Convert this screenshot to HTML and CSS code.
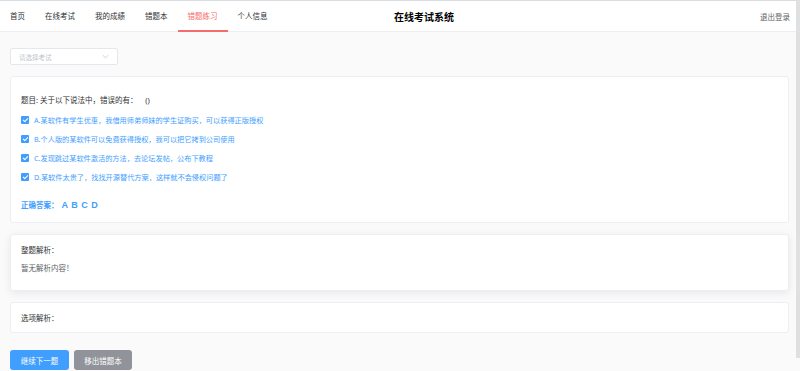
FILE: index.html
```html
<!DOCTYPE html>
<html lang="zh-CN">
<head>
<meta charset="utf-8">
<title>在线考试系统</title>
<link rel="stylesheet" href="styles.css">
</head>
<body>
<header class="topbar">
  <nav class="menu">
    <a class="menu-item">首页</a>
    <a class="menu-item">在线考试</a>
    <a class="menu-item">我的成绩</a>
    <a class="menu-item">错题本</a>
    <a class="menu-item active">错题练习</a>
    <a class="menu-item">个人信息</a>
  </nav>
  <div class="brand">在线考试系统</div>
  <a class="logout">退出登录</a>
</header>
<main class="content">
  <div class="select">
    <span class="placeholder">请选择考试</span>
    <svg class="chev" width="7" height="5" viewBox="0 0 7 5"><path d="M0.8 1.2 L3.5 3.8 L6.2 1.2" fill="none" stroke="#c0c4cc" stroke-width="0.8"/></svg>
  </div>
  <section class="card question">
    <div class="q-title">题目: 关于以下说法中，错误的有：&nbsp;&nbsp;&nbsp;&nbsp;()</div>
    <ul class="options">
      <li class="opt"><span class="box"></span>A.某软件有学生优惠，我借用师弟师妹的学生证购买，可以获得正版授权</li>
      <li class="opt"><span class="box"></span>B.个人版的某软件可以免费获得授权，我可以把它拷到公司使用</li>
      <li class="opt"><span class="box"></span>C.发现跳过某软件激活的方法，去论坛发帖，公布下教程</li>
      <li class="opt"><span class="box"></span>D.某软件太贵了，找找开源替代方案，这样就不会侵权问题了</li>
    </ul>
    <div class="answer">正确答案：<span class="letters">A B C D</span></div>
  </section>
  <section class="card analysis">
    <div class="line">整题解析：</div>
    <div class="line muted">暂无解析内容！</div>
  </section>
  <section class="card options-analysis">
    <div class="line">选项解析：</div>
  </section>
  <div class="actions">
    <button class="btn primary">继续下一题</button>
    <button class="btn info">移出错题本</button>
  </div>
</main>
<div class="scroll-thumb"></div>
</body>
</html>
```
FILE: styles.css
```css
* { box-sizing: border-box; }
html, body { margin: 0; padding: 0; }
body {
  width: 800px;
  height: 371px;
  overflow: hidden;
  background: #fafafa;
  font-family: "Noto Sans", "Noto Sans CJK SC", sans-serif;
  font-size: 7.5px;
  color: #303133;
  position: relative;
}
.topbar {
  height: 32px;
  background: #fff;
  border-top: 1px solid #d9dde2;
  border-bottom: 1px solid #eceef1;
  display: flex;
  align-items: stretch;
  position: relative;
}
.menu { display: flex; }
.menu-item {
  padding: 0 10px;
  display: flex;
  align-items: center;
  color: #303133;
  font-size: 7.5px;
  border-bottom: 2px solid transparent;
  margin-bottom: -1px;
}
.menu-item.active {
  color: #f56c6c;
  border-bottom-color: #f56c6c;
}
.brand {
  position: absolute;
  left: 394px;
  top: 0;
  height: 31px;
  display: flex;
  align-items: center;
  font-size: 10px;
  font-weight: 700;
  color: #000;
}
.logout {
  margin-left: auto;
  margin-right: 10px;
  display: flex;
  align-items: center;
  color: #606266;
  font-size: 7.5px;
}
.content {
  padding: 16px 11px 0 10px;
}
.select {
  width: 108px;
  height: 17px;
  border: 1px solid #e4e7ed;
  border-radius: 2px;
  background: #fff;
  display: flex;
  align-items: center;
  justify-content: space-between;
  padding: 0 8px 0 8px;
}
.placeholder { color: #c0c4cc; font-size: 6.5px; }
.card {
  background: #fff;
  border: 1px solid #ebeef5;
  border-radius: 3px;
  margin-top: 11px;
}
.question { padding: 14px 10px 8px; }
.q-title { line-height: 18px; color: #303133; }
.options { list-style: none; margin: 2px 0 0; padding: 0; display: flex; flex-direction: column; gap: 1px; }
.opt {
  line-height: 18px;
  font-size: 7.2px;
  color: #409eff;
  display: flex;
  align-items: center;
}
.box {
  width: 8px;
  height: 8px;
  border-radius: 1px;
  background: #409eff;
  margin-right: 5px;
  position: relative;
  flex: none;
}
.box::after {
  content: "";
  position: absolute;
  left: 2.6px;
  top: 0.8px;
  width: 2px;
  height: 4px;
  border: solid #fff;
  border-width: 0 1px 1px 0;
  transform: rotate(45deg);
}
.answer {
  margin-top: 10px;
  line-height: 18px;
  color: #409eff;
  font-weight: 700;
  display: flex;
  align-items: center;
}
.letters {
  font-family: "Liberation Sans", sans-serif;
  font-size: 9px;
  margin-left: 3px;
  word-spacing: 1px;
}
.analysis {
  padding: 6px 10px 13px;
  box-shadow: 0 2px 8px rgba(0,0,0,0.08);
}
.options-analysis { padding: 6px 10px 5px; }
.line { line-height: 18px; color: #303133; }
.line.muted { color: #606266; }
.actions { margin-top: 17px; display: flex; gap: 5px; }
.btn {
  height: 20px;
  width: 59px;
  border: none;
  border-radius: 3px;
  color: #fff;
  font-family: inherit;
  font-size: 7.5px;
  padding: 0;
}
.btn.primary { background: #409eff; }
.btn.info { background: #909399; width: 58px; }
.scroll-thumb {
  position: absolute;
  right: 0;
  top: 0;
  width: 4px;
  height: 358px;
  background: #e0e0e0;
}
```
